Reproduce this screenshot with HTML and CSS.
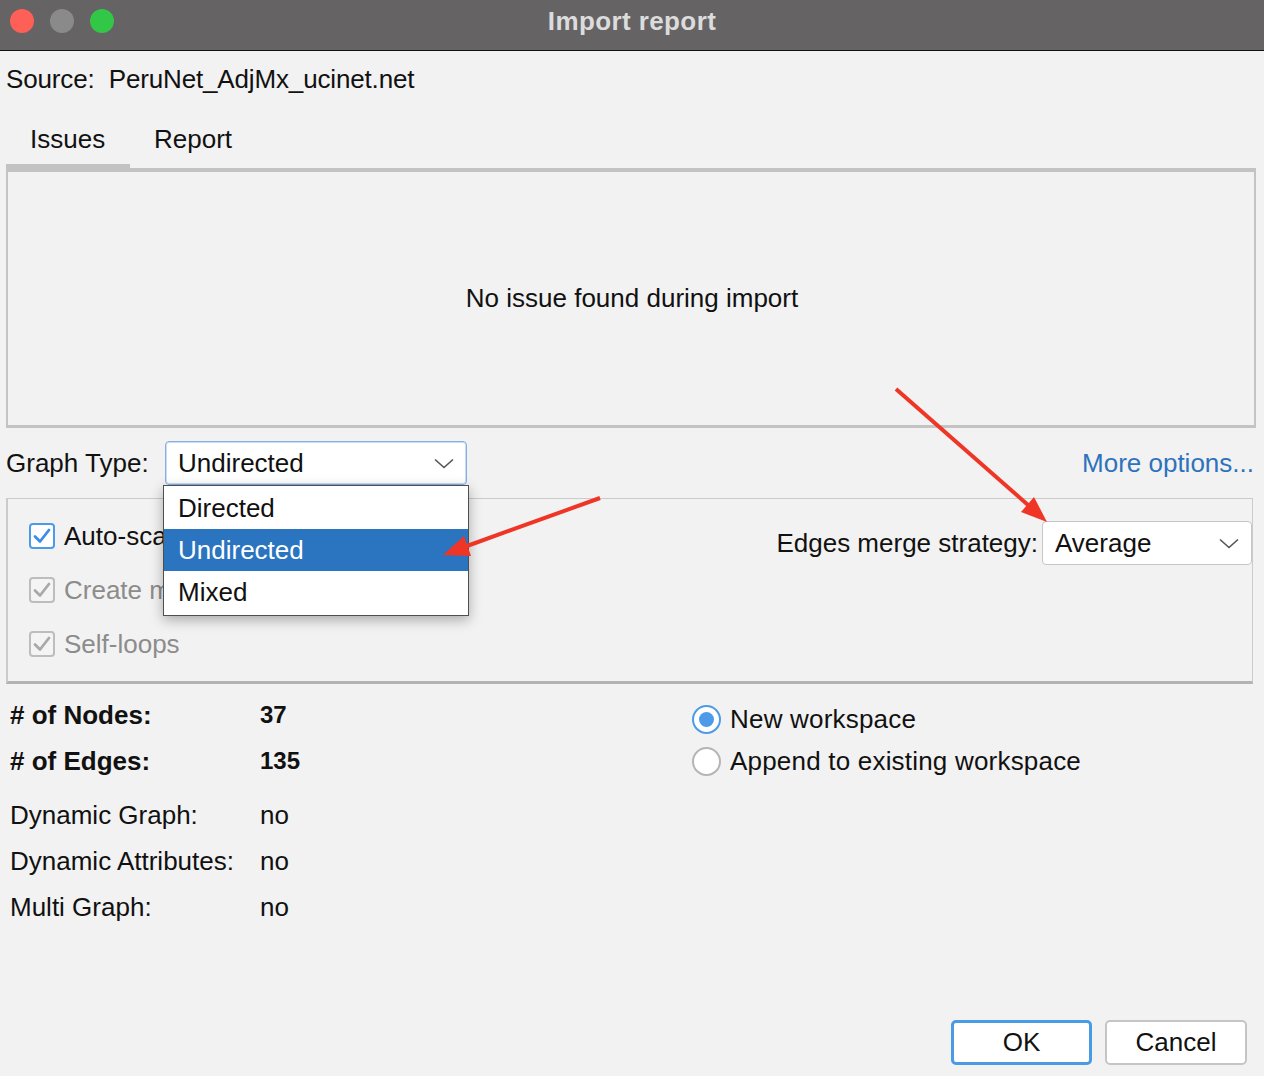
FILE: index.html
```html
<!DOCTYPE html>
<html>
<head>
<meta charset="utf-8">
<link rel="stylesheet" href="styles.css">
</head>
<body>
<div class="window">
  <div class="titlebar">
    <div class="lights">
      <span class="light red"></span>
      <span class="light gray"></span>
      <span class="light green"></span>
    </div>
    <div class="title">Import report</div>
  </div>

  <div class="source">Source:&nbsp; PeruNet_AdjMx_ucinet.net</div>

  <div class="tabs">
    <div class="tab active">Issues</div>
    <div class="tab">Report</div>
  </div>

  <div class="issues-panel">No issue found during import</div>

  <div class="type-row">
    <div class="type-left">
      <span class="type-label">Graph Type:</span>
      <div class="combo-wrap">
        <div class="combo focused">
          <span>Undirected</span>
          <svg class="chev" width="20" height="11" viewBox="0 0 20 11"><path d="M1 1.5 L10 9.5 L19 1.5" fill="none" stroke="#555" stroke-width="1.6"/></svg>
        </div>
        <div class="popup">
          <div class="item">Directed</div>
          <div class="item selected">Undirected</div>
          <div class="item">Mixed</div>
        </div>
      </div>
    </div>
    <span class="more">More options...</span>
  </div>

  <div class="options-panel">
    <div class="checks">
      <div class="check-row">
        <span class="box on">
          <svg width="20" height="18" viewBox="0 0 20 18"><path d="M3 9.5 L8 14.5 L17 3" fill="none" stroke="#3b8ee5" stroke-width="2.8" stroke-linecap="round" stroke-linejoin="round"/></svg>
        </span>
        <span class="check-text">Auto-scale</span>
      </div>
      <div class="check-row disabled">
        <span class="box">
          <svg width="20" height="18" viewBox="0 0 20 18"><path d="M3 9.5 L8 14.5 L17 3" fill="none" stroke="#a9a9a9" stroke-width="2.8" stroke-linecap="round" stroke-linejoin="round"/></svg>
        </span>
        <span class="check-text">Create missing nodes</span>
      </div>
      <div class="check-row disabled">
        <span class="box">
          <svg width="20" height="18" viewBox="0 0 20 18"><path d="M3 9.5 L8 14.5 L17 3" fill="none" stroke="#a9a9a9" stroke-width="2.8" stroke-linecap="round" stroke-linejoin="round"/></svg>
        </span>
        <span class="check-text">Self-loops</span>
      </div>
    </div>
    <div class="merge">
      <span class="merge-label">Edges merge strategy:</span>
      <div class="combo merge-combo">
        <span>Average</span>
        <svg class="chev" width="20" height="11" viewBox="0 0 20 11"><path d="M1 1.5 L10 9.5 L19 1.5" fill="none" stroke="#555" stroke-width="1.6"/></svg>
      </div>
    </div>
  </div>

  <div class="bottom">
    <div class="stats">
      <div class="stat bold"><span class="k"># of Nodes:</span><span class="v">37</span></div>
      <div class="stat bold"><span class="k"># of Edges:</span><span class="v">135</span></div>
      <div class="stat gap"><span class="k">Dynamic Graph:</span><span class="v">no</span></div>
      <div class="stat"><span class="k">Dynamic Attributes:</span><span class="v">no</span></div>
      <div class="stat"><span class="k">Multi Graph:</span><span class="v">no</span></div>
    </div>
    <div class="radios">
      <div class="radio-row"><span class="radio on"><span class="dot"></span></span><span>New workspace</span></div>
      <div class="radio-row"><span class="radio"></span><span>Append to existing workspace</span></div>
    </div>
  </div>

  <div class="buttons">
    <div class="btn default">OK</div>
    <div class="btn">Cancel</div>
  </div>

  <svg class="arrows" width="1264" height="1076" viewBox="0 0 1264 1076">
    <line x1="600" y1="498" x2="467" y2="546" stroke="#ef3526" stroke-width="4"/>
    <polygon points="443,555 471,556 464,536" fill="#ef3526"/>
    <line x1="896" y1="389" x2="1028" y2="505" stroke="#ef3526" stroke-width="4"/>
    <polygon points="1047,522 1021,512 1034,497" fill="#ef3526"/>
  </svg>
</div>
</body>
</html>
```

FILE: styles.css
```css
* { box-sizing: border-box; }

html, body {
  margin: 0;
  padding: 0;
  background: #f2f2f2;
}

body {
  font-family: "Liberation Sans", Arial, sans-serif;
  font-size: 26px;
  color: #111;
}

.window {
  position: relative;
  width: 1264px;
  height: 1076px;
  display: flex;
  flex-direction: column;
  overflow: hidden;
}

.titlebar {
  position: relative;
  height: 51px;
  background: #656364;
  border-bottom: 1px solid #111;
  display: flex;
  align-items: center;
  justify-content: center;
  flex-shrink: 0;
}

.lights {
  position: absolute;
  left: 10px;
  top: 9px;
  display: flex;
  gap: 16px;
}

.light {
  width: 24px;
  height: 24px;
  border-radius: 50%;
  display: block;
}
.light.red { background: #fe5f57; }
.light.gray { background: #8b8a8a; }
.light.green { background: #33c748; }

.title {
  color: #dcdcdc;
  font-weight: bold;
  font-size: 26px;
  letter-spacing: 0.4px;
  margin-top: -8px;
}

.source {
  margin-top: 13px;
  margin-left: 6px;
  line-height: 30px;
  height: 30px;
  letter-spacing: -0.15px;
}

.tabs {
  display: flex;
  margin-left: 6px;
  height: 74px;
  align-items: flex-end;
}

.tab {
  line-height: 30px;
  padding: 0 24px 14px 24px;
}

.tab.active {
  width: 124px;
  padding-bottom: 10px;
  border-bottom: 4px solid #c3c3c3;
}

.issues-panel {
  margin-left: 6px;
  width: 1250px;
  height: 260px;
  border-top: 4px solid #c3c3c3;
  border-left: 2px solid #c3c3c3;
  border-right: 2px solid #c3c3c3;
  border-bottom: 3px solid #c3c3c3;
  display: flex;
  align-items: center;
  justify-content: center;
  padding-left: 2px;
  flex-shrink: 0;
}

.type-row {
  margin-top: 13px;
  height: 44px;
  display: flex;
  align-items: center;
  justify-content: space-between;
  padding: 0 10px 0 6px;
  position: relative;
  z-index: 5;
  flex-shrink: 0;
}

.type-left {
  display: flex;
  align-items: center;
}

.type-label {
  width: 159px;
}

.combo-wrap {
  position: relative;
}

.combo {
  height: 44px;
  background: #fff;
  border: 1px solid #c6c6c6;
  border-radius: 4px;
  display: flex;
  align-items: center;
  justify-content: space-between;
  padding: 0 12px 0 12px;
}

.combo.focused {
  width: 302px;
  border: 1px solid #86b0e3;
  box-shadow: inset 0 0 0 1px #c9dcf4;
}

.chev { display: block; }

.popup {
  position: absolute;
  left: -2px;
  top: 44px;
  width: 306px;
  height: 131px;
  background: #fff;
  border: 1px solid #4f4f4f;
  box-shadow: 0 4px 12px rgba(0, 0, 0, 0.3);
  padding-top: 1px;
}

.item {
  height: 42px;
  line-height: 42px;
  padding-left: 14px;
}

.item.selected {
  background: #2a74c0;
  color: #fff;
}

.more {
  color: #2e72bd;
}

.options-panel {
  margin-top: 13px;
  margin-left: 6px;
  width: 1247px;
  height: 186px;
  border: 1px solid #cbcbcb;
  border-left-width: 2px;
  border-bottom: 3px solid #b3b3b3;
  display: flex;
  justify-content: space-between;
  flex-shrink: 0;
}

.checks {
  padding: 24px 0 0 21px;
  display: flex;
  flex-direction: column;
  gap: 28px;
}

.check-row {
  display: flex;
  align-items: center;
  height: 26px;
  gap: 9px;
  white-space: nowrap;
}

.check-row.disabled { color: #8c8c8c; }

.box {
  width: 26px;
  height: 26px;
  border: 2px solid #bdbdbd;
  border-radius: 4px;
  background: #f4f4f4;
  display: flex;
  align-items: center;
  justify-content: center;
  flex-shrink: 0;
}

.box.on {
  border-color: #4d9be8;
  background: #fff;
}

.merge {
  margin-top: 22px;
  display: flex;
  align-items: center;
  height: 44px;
}

.merge-label {
  margin-right: 4px;
}

.merge-combo {
  width: 210px;
  padding-right: 12px;
}

.bottom {
  display: flex;
  flex-shrink: 0;
}

.stats {
  width: 692px;
  padding: 8px 0 0 10px;
}

.stat {
  display: flex;
  height: 46px;
  align-items: center;
}

.stat.bold { font-weight: bold; font-size: 26px; }
.stat.bold .v { font-size: 24px; }
.stat.gap { margin-top: 8px; }

.stat .k { width: 250px; }

.radios {
  padding-top: 14px;
}

.radio-row {
  height: 42px;
  display: flex;
  align-items: center;
  gap: 9px;
  letter-spacing: 0.2px;
}

.radio {
  width: 29px;
  height: 29px;
  border-radius: 50%;
  border: 2px solid #b5b5b5;
  background: #fff;
  display: flex;
  align-items: center;
  justify-content: center;
}

.radio.on {
  border-color: #4d9be8;
}

.radio .dot {
  width: 15px;
  height: 15px;
  border-radius: 50%;
  background: #4d9be8;
}

.buttons {
  margin-top: auto;
  margin-bottom: 11px;
  display: flex;
  justify-content: flex-end;
  gap: 13px;
  padding-right: 17px;
}

.btn {
  width: 142px;
  height: 45px;
  background: #fff;
  border: 2px solid #c5c5c5;
  border-radius: 5px;
  display: flex;
  align-items: center;
  justify-content: center;
}

.btn.default {
  width: 141px;
  border: 3px solid #4a9be6;
}

.arrows {
  position: absolute;
  left: 0;
  top: 0;
  z-index: 10;
  pointer-events: none;
}
```
